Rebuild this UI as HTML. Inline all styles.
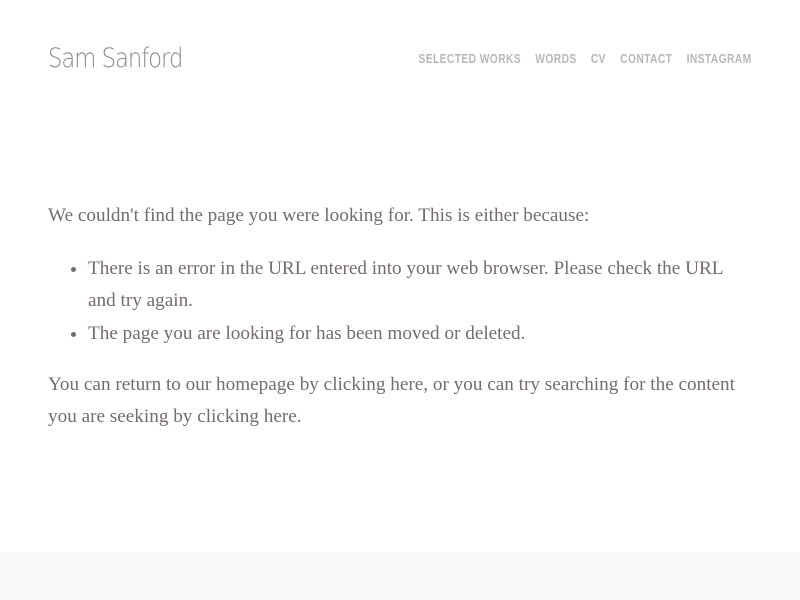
<!DOCTYPE html>
<html><head><meta charset="utf-8"><style>
body{margin:0;width:800px;height:600px;background:#fff;position:relative;overflow:hidden}
.logo{position:absolute;left:48px;top:43px;font:27px "DejaVu Sans","Liberation Sans",sans-serif;font-weight:200;color:#8d8888;letter-spacing:-1.2px;transform:scaleX(0.84);transform-origin:left}
.nav{position:absolute;right:48px;top:51px;font:bold 13px "Liberation Sans Narrow","Liberation Sans",sans-serif;color:#bbb6b6;letter-spacing:0.5px;white-space:nowrap;transform:scaleX(0.79);transform-origin:right}
.nav span{margin-left:18px}
.c{position:absolute;left:48px;top:200px;width:710px;font:19.2px/32px "Liberation Serif",serif;color:#756c6c}
p{margin:0}
ul{margin:20px 0 19px 0;padding-left:40px;padding-right:30px}
ul li::marker{font-size:18px}
.foot{position:absolute;left:0;top:552px;width:800px;height:48px;background:#f8f8f8}
</style></head><body>
<div class="logo">Sam Sanford</div>
<div class="nav"><span>SELECTED WORKS</span><span>WORDS</span><span>CV</span><span>CONTACT</span><span>INSTAGRAM</span></div>
<div class="c">
<p>We couldn't find the page you were looking for. This is either because:</p>
<ul><li>There is an error in the URL entered into your web browser. Please check the URL and try again.</li><li>The page you are looking for has been moved or deleted.</li></ul>
<p>You can return to our homepage by clicking here, or you can try searching for the content you are seeking by clicking here.</p>
</div>
<div class="foot"></div>
</body></html>
